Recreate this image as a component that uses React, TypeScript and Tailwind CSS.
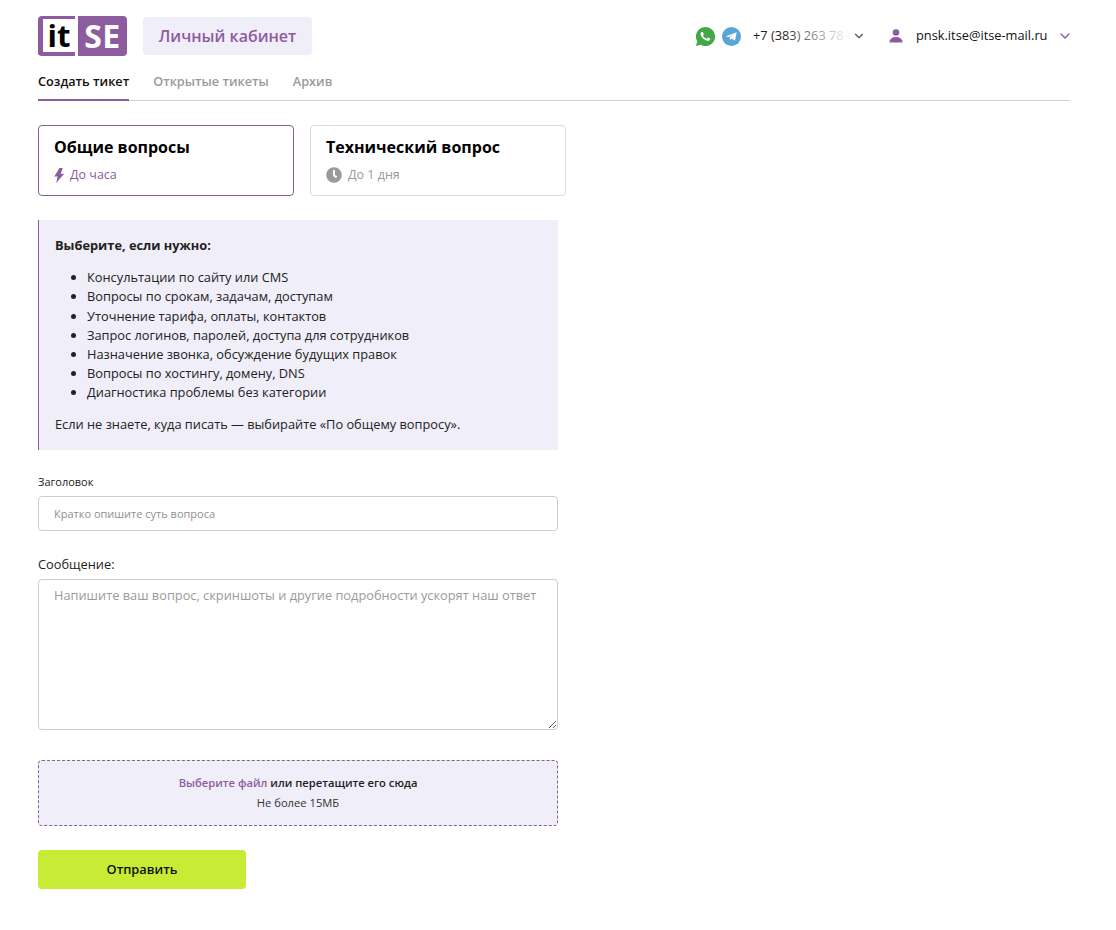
import { FaClock } from 'react-icons/fa';
import { RiWhatsappFill } from 'react-icons/ri';
import { ChevronDown } from 'lucide-react';

const bullets = [
  'Консультации по сайту или CMS',
  'Вопросы по срокам, задачам, доступам',
  'Уточнение тарифа, оплаты, контактов',
  'Запрос логинов, паролей, доступа для сотрудников',
  'Назначение звонка, обсуждение будущих правок',
  'Вопросы по хостингу, домену, DNS',
  'Диагностика проблемы без категории',
];

function Logo() {
  return (
    <div className="flex h-[40px] w-[89px] font-bold leading-none">
      <div className="flex h-full w-[37px] items-center justify-center rounded-l-[4px] border-t-[3px] border-b-[4px] border-l-[5px] border-[#8d5c9e] text-[31px] text-black">
        it
      </div>
      <div className="ml-[3px] flex h-full w-[49px] items-center justify-center rounded-r-[4px] bg-[#8d5c9e] text-[32px] tracking-[0.5px] text-white">
        SE
      </div>
    </div>
  );
}

function Contacts() {
  return (
    <div className="flex items-center">
      <RiWhatsappFill className="h-[23px] w-[23px] text-[#43a947]" />
      <div className="ml-[5px] flex h-[19px] w-[19px] items-center justify-center rounded-full bg-[#5aa5d8]">
        <svg viewBox="0 0 24 24" className="h-[13px] w-[13px] fill-white">
          <path d="M2 11.5 21.5 4 18.5 20l-6-4.2-3 2.800-.7-5L17 7l-10.600 6.400z" />
        </svg>
      </div>
      <div className="relative ml-[12px] w-[97px] text-[12.800px] text-[#222] whitespace-nowrap">
        +7 (383) 263 78-
        <div className="absolute inset-y-0 left-[28px] right-0 bg-gradient-to-r from-transparent to-white" />
      </div>
      <ChevronDown className="ml-[2px] h-[14px] w-[14px] text-[#555]" strokeWidth={2} />
      <svg viewBox="0 0 16 16" className="ml-[22px] h-[16px] w-[16px] fill-[#8d5c9e]">
        <circle cx="8" cy="4.500" r="3.300" />
        <path d="M1.500 14.500c0-3.600 2.800-5.500 6.500-5.500s6.500 1.900 6.500 5.500z" />
      </svg>
      <div className="ml-[12px] w-[131px] whitespace-nowrap text-[12.800px] text-[#111]">pnsk.itse@itse-mail.ru</div>
      <ChevronDown className="ml-[10px] mr-[-3px] h-[16px] w-[16px] text-[#8d5c9e]" strokeWidth={2} />
    </div>
  );
}

export default function App() {
  return (
    <div className="min-h-[930px] bg-white pl-[38px] pr-[46px] pt-[16px] font-['Open_Sans','Noto_Sans',sans-serif] text-[#222]">
      {/* Header */}
      <div className="flex h-[40px] items-center justify-between">
        <div className="flex items-center">
          <Logo />
          <div className="ml-[16px] flex h-[38px] w-[169px] items-center justify-center rounded-[4px] bg-[#f0eef8] text-[16px] font-semibold text-[#8d5c9e]">
            Личный кабинет
          </div>
        </div>
        <Contacts />
      </div>

      {/* Tabs */}
      <div className="mt-[16px] flex h-[29px] gap-[24px] border-b border-[#d0ced6] text-[12.700px] font-semibold">
        <div className="h-[29px] border-b-[2px] border-[#8d5c9e] text-[#111]">Создать тикет</div>
        <div className="text-[#9a9a9a]">Открытые тикеты</div>
        <div className="text-[#9a9a9a]">Архив</div>
      </div>

      {/* Ticket type */}
      <div className="mt-[24px] flex gap-[16px]">
        <div className="h-[71px] w-[256px] rounded-[4px] border border-[#85608f] pl-[15px] pt-[10px]">
          <div className="text-[16px] leading-[22px] font-bold text-black">Общие вопросы</div>
          <div className="mt-[8px] flex items-center text-[12.500px] leading-[18px] text-[#8d5c9e]">
            <svg viewBox="0 0 12 16" className="ml-[-1px] h-[15px] w-[12px] fill-[#8d5c9e]">
              <path d="M6.500 0 1 9h3.500L3 16 11.500 6H7.800L10 0z" />
            </svg>
            <span className="ml-[5px]">До часа</span>
          </div>
        </div>
        <div className="h-[71px] w-[256px] rounded-[4px] border border-[#dcdcdc] pl-[15px] pt-[10px]">
          <div className="text-[16px] leading-[22px] font-bold text-black">Технический вопрос</div>
          <div className="mt-[8px] flex items-center text-[12.500px] leading-[18px] text-[#9a9a9a]">
            <FaClock className="h-[16px] w-[16px] text-[#9a9a9a]" />
            <span className="ml-[6px]">До 1 дня</span>
          </div>
        </div>
      </div>

      {/* Info */}
      <div className="mt-[24px] h-[230px] w-[520px] border-l border-[#8d5c9e] bg-[#f0eef8] pl-[16px] pt-[16px] text-[12.800px] leading-[19.200px] text-[#222]">
        <div className="font-bold">Выберите, если нужно:</div>
        <ul className="mt-[13px] list-disc pl-[32px]">
          {bullets.map((item) => (
            <li key={item}>{item}</li>
          ))}
        </ul>
        <div className="mt-[12px]">Если не знаете, куда писать — выбирайте «По общему вопросу».</div>
      </div>

      {/* Form */}
      <div className="mt-[24px] text-[11px] leading-[16px] text-[#222]">Заголовок</div>
      <input
        type="text"
        placeholder="Кратко опишите суть вопроса"
        className="mt-[6px] block h-[35px] w-[520px] rounded-[4px] border border-[#cfccd6] pl-[15px] text-[11px] outline-none placeholder:text-[#8f8f8f]"
      />
      <div className="mt-[24px] text-[12.800px] leading-[18px] text-[#222]">Сообщение:</div>
      <textarea
        placeholder="Напишите ваш вопрос, скриншоты и другие подробности ускорят наш ответ"
        className="mt-[6px] block h-[151px] w-[520px] rounded-[4px] border border-[#cfccd6] pl-[15px] pr-[4px] py-[5px] text-[12.800px] leading-[20px] outline-none placeholder:text-[#9a9a9a]"
      />

      <div className="mt-[30px] flex h-[66px] w-[520px] flex-col items-center justify-center rounded-[4px] border border-dashed border-[#8d5c9e] bg-[#f0eef8] text-[11.200px] leading-[20px]">
        <div className="font-semibold text-[#222]">
          <span className="text-[#8d5c9e]">Выберите файл</span> или перетащите его сюда
        </div>
        <div className="text-[#333]">Не более 15МБ</div>
      </div>

      <button className="mt-[24px] block h-[39px] w-[208px] rounded-[4px] bg-[#c8ec35] text-[12.800px] font-semibold text-[#111]">
        Отправить
      </button>
    </div>
  );
}
